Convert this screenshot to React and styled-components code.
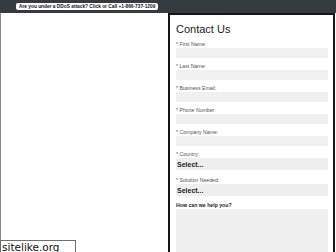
import styled, { createGlobalStyle } from "styled-components";

const GlobalStyle = createGlobalStyle`
  html, body {
    margin: 0;
    padding: 0;
    background: #ffffff;
    font-family: "Liberation Sans", Arial, sans-serif;
    overflow: hidden;
  }
`;

const Page = styled.div`
  width: 336px;
  height: 252px;
  position: relative;
  overflow: hidden;
`;

const TopBar = styled.div`
  height: 13px;
  background: #363b40;
  display: flex;
  align-items: center;
  padding-left: 16px;
  box-sizing: border-box;
`;

const AlertPill = styled.div`
  background: #ffffff;
  color: #111;
  border-radius: 2px;
  font-size: 4.8px;
  font-weight: bold;
  line-height: 7px;
  height: 7px;
  padding: 0 3px;
  white-space: nowrap;
`;

const Main = styled.div`
  display: grid;
  grid-template-columns: 168px 167px;
  height: 239px;
`;

const LeftArea = styled.div`
  border-left: 1px solid #8a8a8a;
`;

const Panel = styled.div`
  border: 2px solid #151515;
  border-bottom: none;
  padding: 8px 5px 0 6px;
`;

const Title = styled.h2`
  margin: 0 0 6px;
  font-size: 11px;
  line-height: 12px;
  font-weight: normal;
  color: #1a1a1a;
`;

const Field = styled.div`
  margin-bottom: ${(p) => p.$gap || 5}px;
`;

const Label = styled.div`
  font-size: 5.2px;
  line-height: 6px;
  height: 6px;
  margin-bottom: 1px;
  color: ${(p) => (p.$strong ? "#222" : "#555")};
  font-weight: ${(p) => (p.$strong ? "bold" : "normal")};
`;

const Input = styled.div`
  height: 10px;
  background: #f0f0f0;
`;

const Select = styled.div`
  height: 12px;
  background: #eeeeee;
  display: flex;
  align-items: center;
  padding-left: 1px;
  font-size: 7px;
  font-weight: bold;
  color: #222;
`;

const TextArea = styled.div`
  height: 60px;
  background: #efefef;
`;

const Watermark = styled.div`
  position: absolute;
  left: 0;
  bottom: 0;
  width: 76px;
  height: 12px;
  border: 1px solid #6d6d6d;
  border-bottom: none;
  box-sizing: border-box;
  background: #ffffff;
  font-family: "DejaVu Sans", Verdana, sans-serif;
  font-size: 10.5px;
  line-height: 12px;
  padding-left: 1px;
  color: #111;
`;

const fields = [
  "* First Name:",
  "* Last Name:",
  "* Business Email:",
  "* Phone Number:",
  "* Company Name:",
];

export default function App() {
  return (
    <Page>
      <GlobalStyle />
      <TopBar>
        <AlertPill>Are you under a DDoS attack? Click or Call +1-866-737-1209</AlertPill>
      </TopBar>
      <Main>
        <LeftArea />
        <Panel>
          <Title>Contact Us</Title>
          {fields.map((f) => (
            <Field key={f}>
              <Label>{f}</Label>
              <Input />
            </Field>
          ))}
          <Field $gap={7}>
            <Label>* Country:</Label>
            <Select>Select...</Select>
          </Field>
          <Field $gap={6}>
            <Label>* Solution Needed:</Label>
            <Select>Select...</Select>
          </Field>
          <Field>
            <Label $strong>How can we help you?</Label>
            <TextArea />
          </Field>
        </Panel>
      </Main>
      <Watermark>sitelike.org</Watermark>
    </Page>
  );
}
